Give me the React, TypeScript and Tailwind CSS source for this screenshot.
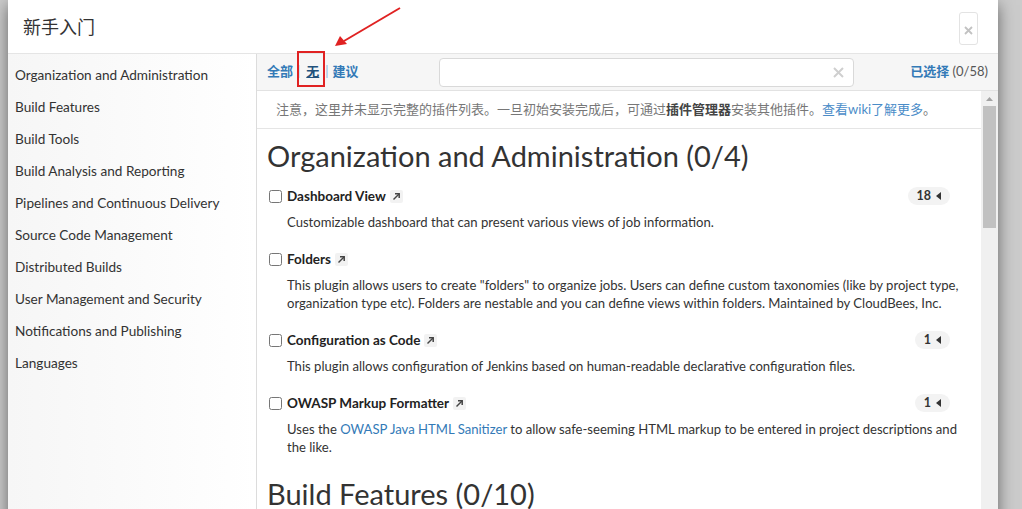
import React from "react";

const font = "font-['Lato','Noto_Sans_CJK_SC',sans-serif]";

const categories = [
  "Organization and Administration",
  "Build Features",
  "Build Tools",
  "Build Analysis and Reporting",
  "Pipelines and Continuous Delivery",
  "Source Code Management",
  "Distributed Builds",
  "User Management and Security",
  "Notifications and Publishing",
  "Languages",
];

type Plugin = { name: string; count: string; desc: React.ReactNode };

const plugins: Plugin[] = [
  {
    name: "Dashboard View",
    count: "18",
    desc: "Customizable dashboard that can present various views of job information.",
  },
  {
    name: "Folders",
    count: "",
    desc: 'This plugin allows users to create "folders" to organize jobs. Users can define custom taxonomies (like by project type, organization type etc). Folders are nestable and you can define views within folders. Maintained by CloudBees, Inc.',
  },
  {
    name: "Configuration as Code",
    count: "1",
    desc: "This plugin allows configuration of Jenkins based on human-readable declarative configuration files.",
  },
  {
    name: "OWASP Markup Formatter",
    count: "1",
    desc: (
      <>
        Uses the <a className="text-[#337ab7]">OWASP Java HTML Sanitizer</a> to allow safe-seeming HTML markup to be
        entered in project descriptions and the like.
      </>
    ),
  },
];

const ExtIcon = () => (
  <span className="ml-[4px] inline-flex w-[13px] h-[13px] items-center justify-center bg-[#f2f2f2] rounded-[2px]">
    <svg width="9" height="9" viewBox="0 0 9 9" fill="none" stroke="#444" strokeWidth="1.5">
      <path d="M1.5 7.5 L7 2" />
      <path d="M3 1.8 H7.2 V6" />
    </svg>
  </span>
);

const Badge = ({ count }: { count: string }) => (
  <span className="ml-auto mr-[15px] inline-flex h-[18px] items-center gap-[5px] rounded-full bg-[#f3f3f3] px-[9px] text-[12.5px] font-bold text-[#333]">
    {count}
    <svg width="5" height="8" viewBox="0 0 5 8">
      <path d="M5 0 L0 4 L5 8 Z" fill="#333" />
    </svg>
  </span>
);

export default function App() {
  return (
    <div className={`relative w-[1022px] h-[509px] overflow-hidden bg-[#cbcbcb] pl-[8px] ${font}`}>
      <div className="w-[990px] h-[560px] bg-white flex flex-col shadow-[0_5px_15px_rgba(0,0,0,0.5)]">
        {/* header */}
        <div className="h-[54px] shrink-0 flex items-start border-b border-[#e5e5e5] pl-[15px] pr-[20px]">
          <h1 className="mt-[14px] text-[18px] leading-[26px] text-[#333]">新手入门</h1>
          <button className="ml-auto mt-[12px] w-[19px] h-[33px] border border-[#e3e3e3] rounded-[3px] flex items-center justify-center pt-[4px]">
            <svg width="9" height="9" viewBox="0 0 9 9" stroke="#c2c2c2" strokeWidth="1.8">
              <path d="M1 1 L8 8 M8 1 L1 8" />
            </svg>
          </button>
        </div>

        <div className="flex flex-1 min-h-0">
          {/* sidebar */}
          <div className="w-[249px] shrink-0 border-r border-[#dcdcdc] bg-gradient-to-r from-[#f6f6f6] to-white pt-[5px] pl-[7px]">
            {categories.map((c) => (
              <div key={c} className="h-[32px] flex items-center text-[13.6px] text-[#333]">
                {c}
              </div>
            ))}
          </div>

          {/* main */}
          <div className="flex-1 flex flex-col min-w-0">
            <div className="h-[37px] shrink-0 flex items-center bg-[#f6f6f6] border-b border-[#e2e2e2] pl-[10px] pr-[10px] text-[13px]">
              <div className="flex items-center gap-[4px] font-bold text-[#337ab7]">
                <span>全部</span>
                <span className="text-[#8fb3d6] font-normal">|</span>
                <span className="text-[#23527c] underline px-[2px]">无</span>
                <span className="text-[#8fb3d6] font-normal">|</span>
                <span>建议</span>
              </div>
              <div className="ml-[80px] w-[415px] h-[29px] bg-white border border-[#d9d9d9] rounded-[4px] flex items-center justify-end pr-[9px]">
                <svg width="11" height="11" viewBox="0 0 11 11" stroke="#cfcfcf" strokeWidth="2">
                  <path d="M1 1 L10 10 M10 1 L1 10" />
                </svg>
              </div>
              <div className="ml-auto">
                <span className="font-bold text-[#337ab7]">已选择</span>
                <span className="text-[#555]"> (0/58)</span>
              </div>
            </div>

            <div className="flex flex-1 min-h-0">
              <div className="flex-1 min-w-0">
                <div className="h-[38px] flex items-center border-b border-[#e5e5e5] pl-[19px] text-[13px] text-[#777]">
                  注意，这里并未显示完整的插件列表。一旦初始安装完成后，可通过
                  <span className="font-bold text-[#444]">插件管理器</span>安装其他插件。
                  <span className="text-[#4a8cc8]">查看wiki了解更多</span>。
                </div>

                <div className="pl-[10px] pr-[16px]">
                  <h2 className="mt-[9px] text-[29px] leading-[36px] text-[#333]">Organization and Administration (0/4)</h2>
                  <div className="mt-[12px] flex flex-col gap-[18px]">
                    {plugins.map((p) => (
                      <div key={p.name}>
                        <div className="h-[20px] flex items-center">
                          <input type="checkbox" className="m-0 ml-[2px] w-[13px] h-[13px]" />
                          <span className="ml-[5px] text-[13.5px] font-bold text-[#222]">{p.name}</span>
                          <ExtIcon />
                          {p.count && <Badge count={p.count} />}
                        </div>
                        <p className="mt-[7px] ml-[20px] text-[13.1px] leading-[18px] text-[#333]">{p.desc}</p>
                      </div>
                    ))}
                  </div>
                  <h2 className="mt-[20px] text-[29px] leading-[36px] text-[#333]">Build Features (0/10)</h2>
                </div>
              </div>

              {/* scrollbar */}
              <div className="w-[17px] shrink-0 bg-[#f0f0f0] flex flex-col items-center">
                <div className="h-[15px] flex items-center justify-center">
                  <svg width="7" height="4" viewBox="0 0 7 4">
                    <path d="M0 4 L3.5 0 L7 4 Z" fill="#a3a3a3" />
                  </svg>
                </div>
                <div className="w-[13px] h-[122px] bg-[#c1c1c1]" />
              </div>
            </div>
          </div>
        </div>
      </div>

      {/* annotation */}
      <div className="absolute left-[297px] top-[51px] w-[28px] h-[36px] border-2 border-[#e02222]" />
      <svg className="absolute left-0 top-0" width="1022" height="509" pointerEvents="none">
        <line x1="400" y1="8" x2="344" y2="41" stroke="#e02222" strokeWidth="2" />
        <path d="M335 46 L340 36 L347 44 Z" fill="#e02222" />
      </svg>
    </div>
  );
}
